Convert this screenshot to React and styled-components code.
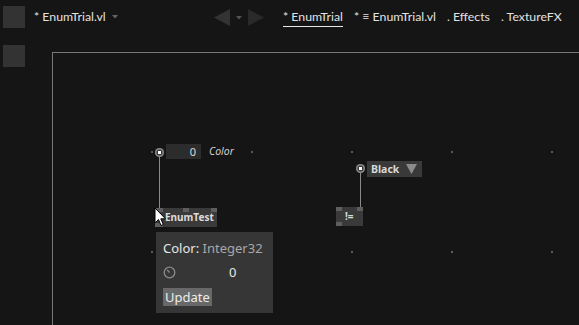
import React from "react"
import styled, { createGlobalStyle } from "styled-components"

const GlobalStyle = createGlobalStyle`
  html, body {
    margin: 0;
    padding: 0;
    background: #151515;
    overflow: hidden;
  }
  body {
    font-family: "Noto Sans", "Open Sans", sans-serif;
    color: #dedede;
  }
`

// canvas origin on the page (sidebar width, header height)
const OX = 28
const OY = 40

const Shell = styled.div`
  display: flex;
  width: 579px;
  height: 325px;
  background: #151515;
`

const Sidebar = styled.div`
  display: flex;
  flex-direction: column;
  gap: 17px;
  width: 28px;
  padding: 6px 0 0 3px;
  box-sizing: border-box;
`

const SideButton = styled.div`
  width: 22px;
  height: 22px;
  background: #333;
`

const Main = styled.div`
  flex: 1;
  display: flex;
  flex-direction: column;
  min-width: 0;
`

const Header = styled.div`
  height: ${OY}px;
  display: flex;
  align-items: flex-start;
  padding: 8px 0 0 6px;
  box-sizing: border-box;
  font-family: Lato, "Noto Sans", sans-serif;
  font-size: 12.3px;
  white-space: nowrap;
`

const DocTitle = styled.div`
  display: flex;
  align-items: center;
  gap: 6px;
  width: 180px;
  line-height: 17px;
  color: #e2e2e2;
`

const Caret = styled.svg`
  display: block;
  fill: ${props => props.color || "#666"};
`

const Nav = styled.div`
  display: flex;
  align-items: center;
  gap: 5px;
  margin-top: 1px;
`

const Tabs = styled.div`
  display: flex;
  gap: 11px;
  margin-left: 19px;
`

const Tab = styled.div`
  line-height: 17px;
  padding-bottom: 1px;
  color: #e2e2e2;
  border-bottom: 1px solid ${props => (props.active ? "#e8e8e8" : "transparent")};
`

const Canvas = styled.div`
  position: relative;
  flex: 1;
  overflow: hidden;
`

const Region = styled.div`
  position: absolute;
  left: ${52 - OX}px;
  top: ${52 - OY}px;
  width: 700px;
  height: 500px;
  border: 1px solid #777;
`

const Dot = styled.div`
  position: absolute;
  width: 2px;
  height: 2px;
  background: #5c5c5c;
`

const Pin = styled.div`
  position: absolute;
  width: 9px;
  height: 9px;
  border-radius: 50%;
  background: #3a3a3a;
  box-shadow: inset 0 0 0 1.5px #8a8a8a;
  display: flex;
  align-items: center;
  justify-content: center;

  &::after {
    content: "";
    width: 3px;
    height: 3px;
    background: #fff;
  }
`

const Link = styled.div`
  position: absolute;
  width: 1px;
  background: #8a8a8a;
`

const IOBox = styled.div`
  position: absolute;
  height: 15px;
  background: #2c2c2c;
  color: #dcdcdc;
  font-size: 11px;
  line-height: 15px;
  text-align: right;
  padding-right: 5px;
  box-sizing: border-box;
`

const Label = styled.div`
  position: absolute;
  font-size: 10.5px;
  font-style: italic;
  color: #cfcfcf;
  line-height: 15px;
`

const EnumBox = styled.div`
  position: absolute;
  height: 16px;
  display: flex;
  align-items: center;
  justify-content: space-between;
  padding: 0 5px 0 4px;
  box-sizing: border-box;
  background: #393939;
  color: #d8d8d8;
  font-size: 10.5px;
  font-weight: 700;
`

const Node = styled.div`
  position: absolute;
  height: 19px;
  background: #3a3a3a;
  color: #dcdcdc;
  font-size: 10px;
  font-weight: 700;
  line-height: 19px;
  box-sizing: border-box;
  padding-left: ${props => props.pad || 0}px;
`

const NodePin = styled.div`
  position: absolute;
  height: 4px;
  background: #5e5e5e;
`

const Tooltip = styled.div`
  position: absolute;
  left: ${156 - OX}px;
  top: ${232 - OY}px;
  width: 117px;
  height: 81px;
  background: #363636;
  box-sizing: border-box;
  padding: 8px 7px 0;
  display: flex;
  flex-direction: column;
  font-size: 13px;
  white-space: nowrap;
`

const TipTitle = styled.div`
  line-height: 16px;
  color: #e6e6e6;

  span {
    color: #a8a8a8;
  }
`

const TipRow = styled.div`
  display: flex;
  align-items: center;
  margin-top: 8px;
  line-height: 16px;
`

const TipValue = styled.div`
  margin-left: 53px;
  color: #e6e6e6;
`

const UpdateButton = styled.div`
  align-self: flex-start;
  margin-top: 8px;
  padding: 0 2px;
  height: 18px;
  line-height: 18px;
  background: #686868;
  color: #ececec;
  font-size: 13px;
`

const Cursor = styled.svg`
  position: absolute;
  left: ${154 - OX}px;
  top: ${207 - OY}px;
`

const dots = []
;[152, 252].forEach(y =>
  [152, 252, 352, 452, 552].forEach(x => dots.push([x, y]))
)

const at = (x, y) => ({ left: x - OX, top: y - OY })

const App = () => (
  <>
    <GlobalStyle />
    <Shell>
      <Sidebar>
        <SideButton />
        <SideButton />
      </Sidebar>
      <Main>
        <Header>
          <DocTitle>
            * EnumTrial.vl
            <Caret width="6" height="4" viewBox="0 0 6 4">
              <path d="M0 0 H6 L3 3.5 Z" />
            </Caret>
          </DocTitle>
          <Nav>
            <Caret width="17" height="17" viewBox="0 0 17 17" color="#333">
              <path d="M0 8.5 L16 0 V17 Z" />
            </Caret>
            <Caret width="6" height="4" viewBox="0 0 6 4" color="#555">
              <path d="M0 0 H6 L3 3.5 Z" />
            </Caret>
            <Caret width="17" height="17" viewBox="0 0 17 17" color="#2a2a2a">
              <path d="M17 8.5 L1 0 V17 Z" />
            </Caret>
          </Nav>
          <Tabs>
            <Tab active>* EnumTrial</Tab>
            <Tab>* ≡ EnumTrial.vl</Tab>
            <Tab>. Effects</Tab>
            <Tab>. TextureFX</Tab>
          </Tabs>
        </Header>
        <Canvas>
          <Region />
          {dots.map(([x, y]) => (
            <Dot key={x + "-" + y} style={at(x - 1, y - 1)} />
          ))}

          <Link style={{ ...at(159, 156), height: 52 }} />
          <Pin style={at(155, 148)} />
          <IOBox style={{ ...at(166, 144), width: 35 }}>0</IOBox>
          <Label style={at(209, 144)}>Color</Label>
          <Node style={{ ...at(155, 208), width: 62 }} pad={10}>
            <NodePin style={{ left: 0, top: 0, width: 8 }} />
            <NodePin style={{ left: 28, top: 0, width: 6 }} />
            <NodePin style={{ left: 56, top: 0, width: 6 }} />
            <NodePin style={{ left: 0, top: 15, width: 8 }} />
            EnumTest
          </Node>

          <Link style={{ ...at(360, 172), height: 35 }} />
          <Pin style={at(356, 164)} />
          <EnumBox style={{ ...at(367, 161), width: 55 }}>
            Black
            <Caret width="11" height="10" viewBox="0 0 11 10" color="#8c8c8c">
              <path d="M0 0 H11 L5.5 10 Z" />
            </Caret>
          </EnumBox>
          <Node style={{ ...at(336, 207), width: 27 }} pad={9}>
            <NodePin style={{ left: 0, top: 0, width: 6 }} />
            <NodePin style={{ left: 21, top: 0, width: 6 }} />
            <NodePin style={{ left: 0, top: 15, width: 6 }} />
            !=
          </Node>

          <Tooltip>
            <TipTitle>
              Color: <span>Integer32</span>
            </TipTitle>
            <TipRow>
              <svg width="13" height="13" viewBox="0 0 13 13">
                <circle cx="6.5" cy="6.5" r="5.3" fill="none" stroke="#8a8a8a" strokeWidth="1.3" />
                <path d="M6.5 6.5 L4.2 3.8" stroke="#8a8a8a" strokeWidth="1.3" />
              </svg>
              <TipValue>0</TipValue>
            </TipRow>
            <UpdateButton>Update</UpdateButton>
          </Tooltip>

          <Cursor width="13" height="20" viewBox="0 0 13 20">
            <path
              d="M1 1 V16 L4.5 12.5 L7 18.5 L9.3 17.5 L6.8 11.8 L11.5 11.8 Z"
              fill="#fff"
              stroke="#000"
              strokeWidth="1"
              strokeLinejoin="round"
            />
          </Cursor>
        </Canvas>
      </Main>
    </Shell>
  </>
)

export default App
